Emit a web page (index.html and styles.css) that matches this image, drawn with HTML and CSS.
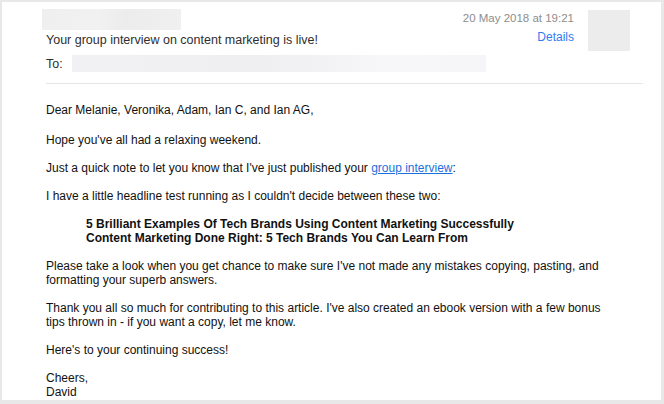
FILE: index.html
```html
<!DOCTYPE html>
<html>
<head>
<meta charset="utf-8">
<link rel="stylesheet" href="styles.css">
</head>
<body>
<div class="window">
  <div class="header">
    <div class="top">
      <div class="who">
        <div class="sender"></div>
        <div class="subject">Your group interview on content marketing is live!</div>
        <div class="to-row"><span class="to-label">To:</span><span class="to-value"></span></div>
      </div>
      <div class="meta">
        <div class="date">20 May 2018 at 19:21</div>
        <a class="details">Details</a>
      </div>
      <div class="avatar"></div>
    </div>
    <div class="sep"></div>
  </div>
  <div class="body">
    <p class="greeting">Dear Melanie, Veronika, Adam, Ian C, and Ian AG,</p>
    <p>Hope you've all had a relaxing weekend.</p>
    <p>Just a quick note to let you know that I've just published your <a class="link">group interview</a>:</p>
    <p>I have a little headline test running as I couldn't decide between these two:</p>
    <p class="headlines">5 Brilliant Examples Of Tech Brands Using Content Marketing Successfully<br>Content Marketing Done Right: 5 Tech Brands You Can Learn From</p>
    <p>Please take a look when you get chance to make sure I've not made any mistakes copying, pasting, and formatting your superb answers.</p>
    <p>Thank you all so much for contributing to this article. I've also created an ebook version with a few bonus tips thrown in - if you want a copy, let me know.</p>
    <p>Here's to your continuing success!</p>
    <p>Cheers,<br>David</p>
  </div>
</div>
</body>
</html>
```
FILE: styles.css
```css
html, body {
  margin: 0;
  padding: 0;
  background: #fff;
}
.window {
  box-sizing: border-box;
  width: 664px;
  height: 404px;
  border-style: solid;
  border-color: #e8e8e8;
  border-width: 2px 3px 4px 2px;
  background: #fff;
  overflow: hidden;
  font-family: "Liberation Sans", Arial, sans-serif;
}
.header {
  padding: 7px 18px 0 44px;
}
.top {
  display: flex;
  align-items: flex-start;
}
.who {
  flex: 1;
  min-width: 0;
}
.sender {
  width: 139px;
  height: 21px;
  margin-left: -4px;
  background: linear-gradient(100deg, #efefef 0%, #f1f1f1 40%, #ececec 60%, #f0f0f0 100%);
}
.subject {
  margin-top: 2px;
  font-size: 12.5px;
  line-height: 16px;
  color: #2e2e2e;
  white-space: nowrap;
}
.to-row {
  display: flex;
  align-items: center;
  margin-top: 7px;
  height: 17px;
}
.to-label {
  flex: none;
  font-size: 12.5px;
  color: #2e2e2e;
  width: 26px;
}
.to-value {
  flex: none;
  width: 414px;
  height: 17px;
  background: linear-gradient(90deg, #f1f1f3 0%, #efeff1 45%, #f2f2f4 60%, #f7f7f9 75%, #f6f6f8 100%);
}
.meta {
  display: flex;
  flex-direction: column;
  align-items: flex-end;
  padding-top: 2px;
  white-space: nowrap;
}
.date {
  font-size: 11.5px;
  line-height: 14px;
  color: #8d8d8d;
}
.details {
  margin-top: 5px;
  font-size: 12px;
  line-height: 14px;
  color: #2f7cf0;
}
.avatar {
  flex: none;
  width: 42px;
  height: 41px;
  margin: 1px 13px 0 14px;
  background: #ececec;
}
.sep {
  margin-top: 11px;
  height: 1px;
  background: #e6e6e6;
}
.body {
  padding: 19px 46px 0 44px;
  font-size: 12px;
  line-height: 14px;
  color: #111;
}
.body p {
  margin: 0 0 14px 0;
}
.body .greeting {
  margin-bottom: 16px;
}
.headlines {
  padding-left: 40px;
  font-weight: bold;
}
.link {
  color: #1b6fdc;
  text-decoration: underline;
}
```
